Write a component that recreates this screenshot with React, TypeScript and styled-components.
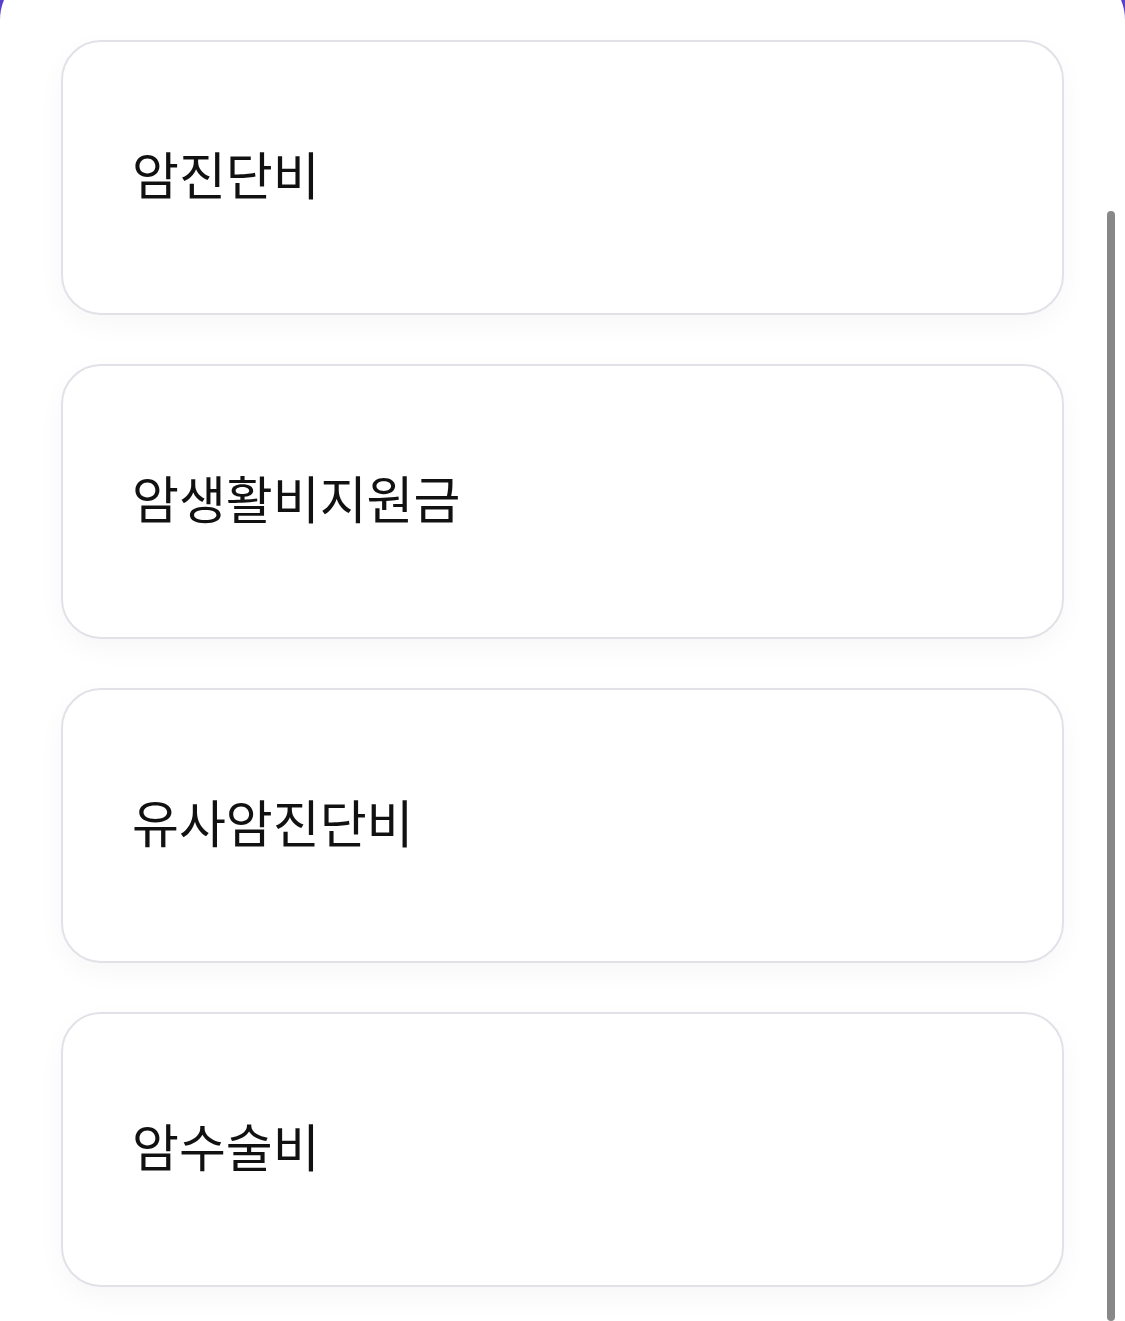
import styled, { createGlobalStyle } from 'styled-components';

const GlobalStyle = createGlobalStyle`
    html, body {
        margin: 0;
        padding: 0;
        height: 1321px;
        overflow: hidden;
        background-color: #5a3fcf;
    }
    body {
        font-family: "Noto Sans CJK KR", "Noto Sans", sans-serif;
    }
`

const Sheet = styled.div`
    position: relative;
    margin-top: -32px;
    height: 1353px;
    overflow: hidden;
    background-color: #ffffff;
    border-radius: 52px 52px 0 0;
    padding: 72px 61px 0;
    box-sizing: border-box;
    display: flex;
    flex-direction: column;
    gap: 49px;
`

const Card = styled.button`
    display: flex;
    align-items: center;
    height: 275px;
    flex-shrink: 0;
    padding: 0 0 9px 69px;
    background-color: #ffffff;
    border: 2px solid #e2e1e8;
    border-radius: 40px;
    box-shadow: 0 10px 28px rgba(30, 20, 60, 0.035);
    font-family: inherit;
    font-size: 51px;
    font-weight: 400;
    color: #111111;
    text-align: left;
    cursor: pointer;
`

const ScrollThumb = styled.div`
    position: absolute;
    top: 243px;
    right: 10px;
    width: 8px;
    height: 1110px;
    border-radius: 4px;
    background-color: #888888;
`

const items = ['암진단비', '암생활비지원금', '유사암진단비', '암수술비']

const App = () => {
    return (
        <>
            <GlobalStyle />
            <Sheet>
                {items.map((label) => (
                    <Card key={label}>{label}</Card>
                ))}
                <ScrollThumb />
            </Sheet>
        </>
    )
}

export default App
